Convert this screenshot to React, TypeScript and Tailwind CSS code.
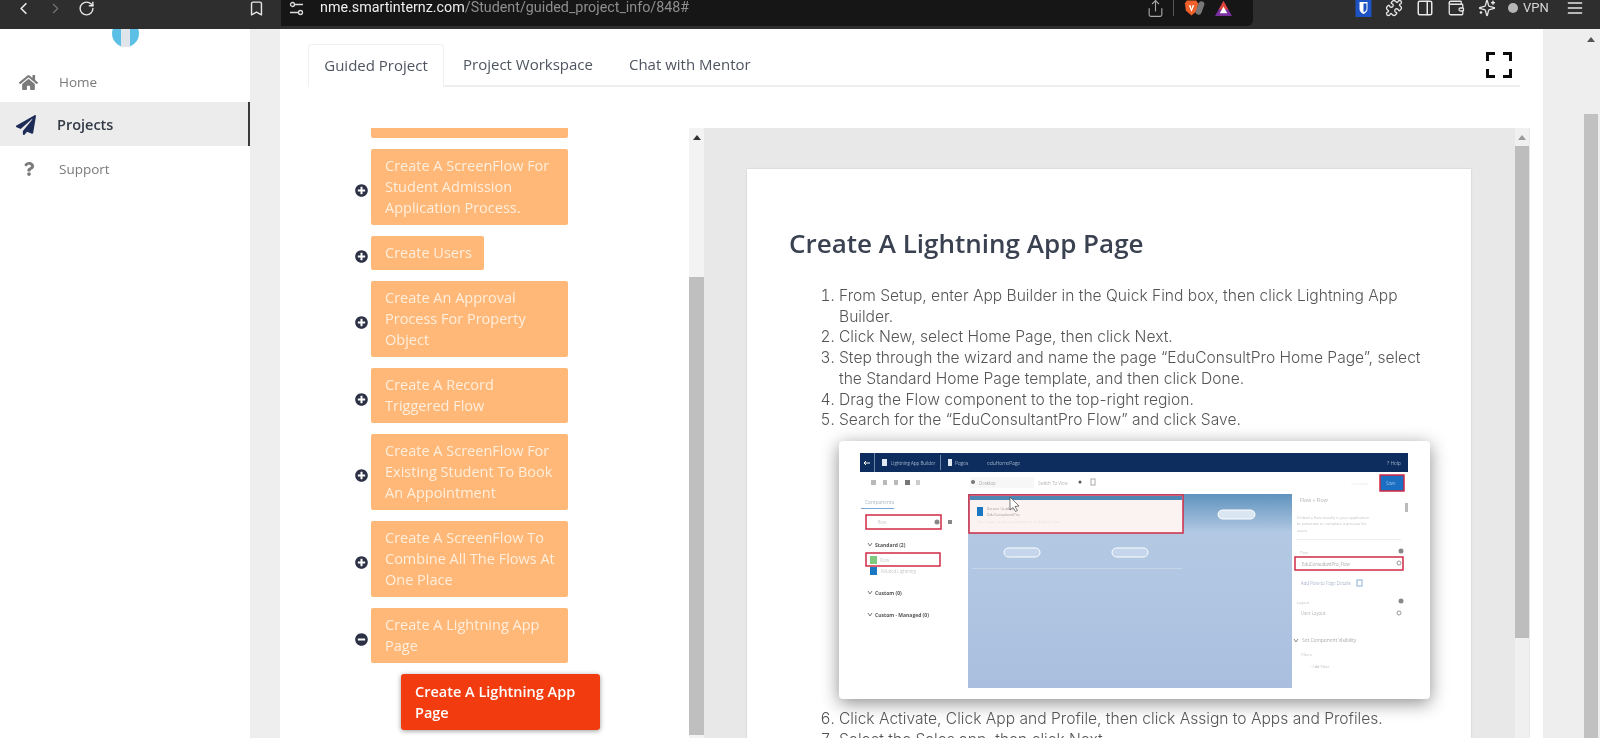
import React from "react";
import { FaHome, FaPaperPlane, FaQuestion, FaPlusCircle, FaMinusCircle } from "react-icons/fa";
import { LuChevronLeft, LuChevronRight, LuRotateCw, LuBookmark, LuShare, LuPuzzle, LuWallet, LuMenu, LuSparkles, LuPanelRight } from "react-icons/lu";

const steps = [
  { t: "Create A ScreenFlow For Student Admission Application Process.", w: "w-[197px]" },
  { t: "Create Users", w: "w-[113px]" },
  { t: "Create An Approval Process For Property Object", w: "w-[197px]" },
  { t: "Create A Record Triggered Flow", w: "w-[197px]" },
  { t: "Create A ScreenFlow For Existing Student To Book An Appointment", w: "w-[197px]" },
  { t: "Create A ScreenFlow To Combine All The Flows At One Place", w: "w-[197px]" },
];

function Arrow({ className }: { className: string }) {
  return <div className={"w-0 h-0 border-l-[4px] border-r-[4px] border-b-[5px] border-l-transparent border-r-transparent " + className} />;
}

function Shot() {
  const t = { fontFamily: "'Open Sans', sans-serif" };
  return (
    <svg viewBox="0 0 591 258" className="w-[591px] h-[258px] blur-[0.5px] block">
      <defs>
        <linearGradient id="cv" x1="0" y1="0" x2="0" y2="1">
          <stop offset="0" stopColor="#5f93bd" />
          <stop offset="0.2" stopColor="#b3c9e3" />
          <stop offset="1" stopColor="#aabfdf" />
        </linearGradient>
      </defs>
      <rect x="21" y="12" width="548" height="19" fill="#0d2d5e" />
      <rect x="35" y="12" width="1" height="19" fill="#6b86a8" />
      <rect x="101" y="14" width="1" height="15" fill="#6b86a8" />
      <path d="M25 22h6M27 20l-2 2 2 2" stroke="#fff" fill="none" />
      <rect x="43" y="18" width="5" height="7" fill="#dfe8f3" />
      <text x="52" y="24" fontSize="4.6" fill="#d5e0ee" style={t}>Lightning App Builder</text>
      <rect x="109" y="18" width="4" height="7" fill="#dfe8f3" />
      <text x="116" y="24" fontSize="5" fill="#d5e0ee" style={t}>Pages</text>
      <text x="148" y="24" fontSize="5" fill="#d5e0ee" style={t}>eduHomePage</text>
      <text x="548" y="24" fontSize="5" fill="#d5e0ee" style={t}>? Help</text>

      <g fill="#b9b9b9"><rect x="32" y="39" width="5" height="5" /><rect x="44" y="39" width="4" height="5" /><rect x="55" y="39" width="4" height="5" /></g>
      <rect x="66" y="39" width="5" height="5" fill="#777" /><rect x="77" y="39" width="4" height="5" fill="#ccc" />
      <rect x="131" y="36" width="64" height="11" fill="#f7f7f7" />
      <circle cx="134" cy="41" r="2" fill="#777" />
      <text x="140" y="44" fontSize="4.5" fill="#888" style={t}>Desktop</text>
      <text x="199" y="44" fontSize="4.5" fill="#888" style={t}>Switch To View</text>
      <circle cx="241" cy="41" r="1.5" fill="#555" />
      <rect x="252" y="38" width="4" height="6" fill="none" stroke="#aaa" />
      <text x="512" y="44" fontSize="4" fill="#ddd" style={t}>Activation...</text>
      <rect x="541" y="34" width="24" height="16" fill="#1b6fc2" stroke="#d02a45" strokeWidth="1.5" />
      <text x="547" y="44" fontSize="4.5" fill="#dbe8f7" style={t}>Save</text>

      <text x="26" y="63" fontSize="5" fill="#7a8aa0" style={t}>Components</text>
      <rect x="22" y="67" width="33" height="1" fill="#7aa5d5" />
      <rect x="27" y="74" width="75" height="14" fill="#fff" stroke="#d02a45" strokeWidth="1.5" />
      <text x="39" y="83" fontSize="4.5" fill="#aaa" style={t}>flow</text>
      <circle cx="98" cy="81" r="2.5" fill="#888" />
      <rect x="109" y="79" width="4" height="4" fill="#888" />
      <text x="36" y="106" fontSize="5" fontWeight="700" fill="#555" style={t}>Standard (2)</text>
      <path d="M29 102l2 3 2-3" stroke="#777" fill="none" />
      <rect x="27" y="112" width="74" height="13" fill="#fff" stroke="#d02a45" strokeWidth="1.5" />
      <rect x="31" y="115" width="7" height="8" fill="#7fc97f" />
      <text x="41" y="121" fontSize="4.5" fill="#aaa" style={t}>Flow</text>
      <rect x="31" y="126" width="7" height="8" fill="#1b77c2" />
      <text x="42" y="132" fontSize="4.5" fill="#aaa" style={t}>Related Lightning</text>
      <path d="M29 150l2 3 2-3" stroke="#777" fill="none" />
      <text x="36" y="154" fontSize="5" fontWeight="700" fill="#555" style={t}>Custom (0)</text>
      <path d="M29 172l2 3 2-3" stroke="#777" fill="none" />
      <text x="36" y="176" fontSize="5" fontWeight="700" fill="#555" style={t}>Custom - Managed (0)</text>

      <rect x="129" y="53" width="324" height="194" fill="url(#cv)" />
      <rect x="130" y="54" width="214" height="38" fill="#fbf3f2" stroke="#d02a45" strokeWidth="1.5" />
      <rect x="131" y="55" width="212" height="4" fill="#4f87b4" />
      <rect x="138" y="66" width="6" height="9" fill="#1b77c2" />
      <text x="148" y="69" fontSize="4" fill="#777" style={t}>Screen Guided</text>
      <text x="148" y="75" fontSize="4" fill="#777" style={t}>EduConsultantPro</text>
      <text x="138" y="82" fontSize="4" fill="#ddd" style={t}>Your page needs a component to display here</text>
      <rect x="379" y="69" width="37" height="9" rx="4.5" fill="#dbe6f3" stroke="#fff" />
      <rect x="165" y="107" width="36" height="9" rx="4.5" fill="#c5d6ec" stroke="#fff" />
      <rect x="273" y="107" width="36" height="9" rx="4.5" fill="#c5d6ec" stroke="#fff" />
      <rect x="133" y="127" width="210" height="0.7" fill="#cfdcee" />
      <path d="M171 56v13l3-2.500 2.500 4 2-1-2.500-4 4-.5z" fill="#fff" stroke="#444" strokeWidth="0.7" />

      <text x="461" y="61" fontSize="5.500" fill="#888" style={t}>Flow » Flow</text>
      <text x="458" y="78" fontSize="4" fill="#aaa" style={t}>Embed a flow visually in your application</text>
      <text x="458" y="84" fontSize="4" fill="#aaa" style={t}>to automate or complete a process for</text>
      <text x="458" y="91" fontSize="4" fill="#aaa" style={t}>users.</text>
      <rect x="457" y="98" width="105" height="0.7" fill="#e5e5e5" />
      <rect x="566" y="62" width="3" height="9" fill="#bbb" />
      <text x="461" y="113" fontSize="4" fill="#aaa" style={t}>Flow</text>
      <circle cx="562" cy="110" r="2.500" fill="#888" />
      <rect x="456" y="116" width="108" height="13" fill="#fff" stroke="#d02a45" strokeWidth="1.5" />
      <text x="463" y="125" fontSize="4.500" fill="#777" style={t}>EduConsultantPro_Flow</text>
      <circle cx="560" cy="122" r="2" fill="none" stroke="#999" />
      <text x="462" y="144" fontSize="4.500" fill="#7a8fb0" style={t}>Add Flow to Page Details</text>
      <rect x="518" y="139" width="5" height="6" fill="none" stroke="#8ab0d8" />
      <text x="458" y="163" fontSize="4" fill="#aaa" style={t}>Layout</text>
      <circle cx="562" cy="160" r="2.500" fill="#888" />
      <text x="462" y="174" fontSize="4.500" fill="#888" style={t}>User Layout</text>
      <circle cx="560" cy="172" r="2" fill="none" stroke="#999" />
      <path d="M455 198l2 3 2-3" stroke="#888" fill="none" />
      <text x="463" y="201" fontSize="5" fill="#777" style={t}>Set Component Visibility</text>
      <text x="462" y="215" fontSize="4" fill="#aaa" style={t}>Filters</text>
      <text x="470" y="227" fontSize="4" fill="#999" style={t}>+ Add Filter</text>
    </svg>
  );
}

export default function App() {
  return (
    <div className="h-[738px] w-[1600px] overflow-hidden flex flex-col bg-white font-['Open_Sans',sans-serif] blur-[0.4px]">
      {/* browser bar */}
      <div className="h-[29px] shrink-0 bg-[#2e2e2e] flex text-[#e6e6e6]">
        <div className="w-[281px] shrink-0 h-[16px] flex items-center pl-[14px]">
          <LuChevronLeft size={19} strokeWidth={2.2} />
          <LuChevronRight size={17} strokeWidth={1.5} className="ml-[14px] text-[#777]" />
          <LuRotateCw size={17} strokeWidth={2} className="ml-[14px]" />
          <LuBookmark size={17} strokeWidth={2} className="ml-[153px]" />
        </div>
        <div className="w-[972px] shrink-0 h-[26px] bg-[#161616] rounded-br-[6px] relative">
          <div className="h-[16px] flex items-center pl-[8px]">
            <svg viewBox="0 0 15 15" className="w-[15px] h-[15px]" fill="none" stroke="#dcdcdc" strokeWidth="1.3">
              <circle cx="3.500" cy="3.500" r="2" />
              <path d="M6 3.500h8M1 11.500h8" />
              <circle cx="11.500" cy="11.500" r="2" />
            </svg>
            <div className="ml-[16px] font-['Roboto',sans-serif] text-[14.3px] text-[#8e8e8e] whitespace-nowrap">
              <span className="text-[#eeeeee]">nme.smartinternz.com</span>/Student/guided_project_info/848#
            </div>
            <div className="ml-auto flex items-center">
              <LuShare size={19} strokeWidth={1.4} className="text-[#a8a8a8]" />
              <div className="w-px h-[16px] bg-[#555] ml-[8px]" />
              <svg viewBox="0 0 16 18" className="w-[15px] h-[18px] ml-[10px]">
                <path d="M3 1h10l2 3-1 8-6 5-6-5-1-8z" fill="#f0602a" />
                <path d="M5 6h2l1 4 1-4h2l-3 7z" fill="#fff" />
              </svg>
              <div className="w-[6px] h-[14px] bg-[#777] rounded-full rotate-[20deg] -ml-[2px]" />
              <svg viewBox="0 0 20 18" className="w-[19px] h-[17px] ml-[11px] mr-[20px]">
                <path d="M10 1l9 16H1z" fill="#7a2fa0" />
                <path d="M10 1l5 9H5z" fill="#e0453a" />
                <path d="M10 7l4 7H6z" fill="#fff" />
              </svg>
            </div>
          </div>
        </div>
        <div className="flex-1 h-[16px] flex items-center pl-[102px]">
          <svg viewBox="0 0 16 18" className="w-[17px] h-[18px]">
            <rect width="16" height="18" fill="#1c52c4" />
            <path d="M4 3h8v7c0 2.500-2 4-4 5-2-1-4-2.500-4-5z" fill="#fff" />
            <path d="M8 4.500h3v5.500c0 1.500-1.500 2.500-3 3.300z" fill="#1c52c4" />
          </svg>
          <LuPuzzle size={18} strokeWidth={1.7} className="ml-[13px]" />
          <LuPanelRight size={18} strokeWidth={2} className="ml-[13px]" />
          <LuWallet size={18} strokeWidth={1.7} className="ml-[13px]" />
          <LuSparkles size={18} strokeWidth={1.7} className="ml-[13px]" />
          <div className="w-[10px] h-[10px] rounded-full bg-[#b5b5b5] ml-[12px]" />
          <span className="ml-[5px] text-[13px] text-[#d6d6d6] font-['Roboto',sans-serif]">VPN</span>
          <LuMenu size={20} strokeWidth={1.6} className="ml-[16px]" />
        </div>
      </div>

      <div className="flex-1 flex min-h-0">
        {/* sidebar */}
        <aside className="w-[250px] shrink-0 bg-white relative overflow-hidden">
          <div className="absolute left-[112px] -top-[9px] w-[27px] h-[27px] rounded-full bg-[#5cc0e6] flex justify-center">
            <div className="w-[9px] h-[27px] bg-[#dfe5ea]" />
          </div>
          <nav className="pt-[31px] text-[13.5px]">
            <div className="h-[42px] pt-[3px] flex items-center text-[#7a7a7a]">
              <FaHome size={19} className="ml-[19px]" />
              <span className="ml-[21px]">Home</span>
            </div>
            <div className="h-[44px] pt-[2px] flex items-center bg-[#ececec] border-r-2 border-[#3a3a3a]">
              <FaPaperPlane size={20} className="ml-[16px] text-[#1d2b57]" />
              <span className="ml-[21px] text-[14.5px] font-semibold text-[#333a45]">Projects</span>
            </div>
            <div className="h-[44px] pt-[2px] flex items-center text-[#7a7a7a]">
              <FaQuestion size={14} className="ml-[22px]" />
              <span className="ml-[23px]">Support</span>
            </div>
          </nav>
        </aside>
        <div className="w-[30px] shrink-0 bg-[#eeeeee]" />

        {/* main */}
        <main className="w-[1263px] shrink-0 bg-white pl-[28px] overflow-hidden">
          <div className="mt-[15px] w-[1212px] h-[43px] border-b-2 border-[#eeeeee] flex items-stretch text-[15px] text-[#4f5560] relative">
            <div className="w-[136px] h-[43px] pb-[2px] bg-white border border-b-0 border-[#f0f0f0] rounded-t-[4px] flex items-center justify-center">Guided Project</div>
            <div className="ml-[19px] flex items-center">Project Workspace</div>
            <div className="ml-[36px] flex items-center">Chat with Mentor</div>
            <svg viewBox="0 0 26 26" className="absolute right-[8px] top-[8px] w-[26px] h-[26px]">
              <path d="M0 9V0h9v3H3v6zM17 0h9v9h-3V3h-6zM0 17h3v6h6v3H0zM23 17h3v9h-9v-3h6z" fill="#0a0a0a" />
            </svg>
          </div>

          <div className="mt-[41px] flex h-[630px]">
            {/* step list */}
            <div className="w-[381px] shrink-0 pl-[47px] flex flex-col gap-[11px] text-[14.5px] leading-[21px] text-[#ffeedd]">
              <div className="ml-[16px] w-[197px] h-[10px] bg-[#ffb877] rounded-b-[2px]" />
              {steps.map((s) => (
                <div key={s.t} className="flex items-center">
                  <FaPlusCircle size={13} className="shrink-0 text-[#2c3145] mt-[7px]" />
                  <div className={"ml-[3px] bg-[#ffb877] rounded-[2px] pl-[14px] pr-[10px] pt-[6px] pb-[7px] " + s.w}>{s.t}</div>
                </div>
              ))}
              <div className="flex items-center">
                <FaMinusCircle size={13} className="shrink-0 text-[#2c3145] mt-[7px]" />
                <div className="ml-[3px] w-[197px] bg-[#ffb877] rounded-[2px] pl-[14px] pr-[10px] pt-[6px] pb-[7px]">Create A Lightning App Page</div>
              </div>
              <div className="ml-[46px] w-[199px] h-[56px] bg-[#f23c0f] rounded-[3px] shadow-[0_1px_5px_rgba(0,0,0,0.4)] pl-[14px] pr-[8px] py-[7px] font-semibold text-white">Create A Lightning App Page</div>
            </div>

            {/* left scrollbar */}
            <div className="w-[15px] shrink-0 bg-[#f3f3f3] flex flex-col items-center">
              <Arrow className="mt-[7px] border-b-[#333]" />
              <div className="mt-[137px] w-full h-[458px] bg-[#bfbfbf]" />
            </div>

            {/* reader panel */}
            <div className="w-[826px] shrink-0 bg-[#e8e8e8] flex">
              <div className="flex-1 pl-[43px] pt-[41px]">
                <div className="w-[724px] h-[600px] bg-white shadow-[0_0_2px_rgba(0,0,0,0.15)] px-[42px]">
                  <h1 className="pt-[54px] text-[26px] leading-[40px] font-semibold text-[#3a4150]">Create A Lightning App Page</h1>
                  <ol className="mt-[23px] ml-[50px] w-[593px] list-decimal font-['Inter',sans-serif] font-light text-[15.6px] leading-[20.700px] text-[#555555]">
                    <li>From Setup, enter App Builder in the Quick Find box, then click Lightning App Builder.</li>
                    <li>Click New, select Home Page, then click Next.</li>
                    <li>Step through the wizard and name the page “EduConsultPro Home Page”, select the Standard Home Page template, and then click Done.</li>
                    <li>Drag the Flow component to the top-right region.</li>
                    <li>Search for the “EduConsultantPro Flow” and click Save.</li>
                    <div className="my-[10px] w-[591px] h-[258px] bg-white rounded-[4px] shadow-[0_4px_18px_rgba(0,0,0,0.45)]"><Shot /></div>
                    <li>Click Activate, Click App and Profile, then click Assign to Apps and Profiles.</li>
                    <li>Select the Sales app, then click Next.</li>
                  </ol>
                </div>
              </div>
              <div className="w-[14px] shrink-0 mr-px flex flex-col items-center bg-[#f0f0f0]">
                <Arrow className="mt-[7px] border-b-[#999]" />
                <div className="mt-[6px] w-full h-[492px] bg-[#bdbdbd]" />
              </div>
            </div>
          </div>
        </main>

        {/* page scrollbar */}
        <div className="flex-1 bg-[#eeeeee] flex justify-end">
          <div className="w-[14px] mr-[2px] flex flex-col items-center">
            <Arrow className="mt-[8px] border-b-[#555]" />
            <div className="mt-[72px] w-full flex-1 bg-[#c1c1c1]" />
          </div>
        </div>
      </div>
    </div>
  );
}
